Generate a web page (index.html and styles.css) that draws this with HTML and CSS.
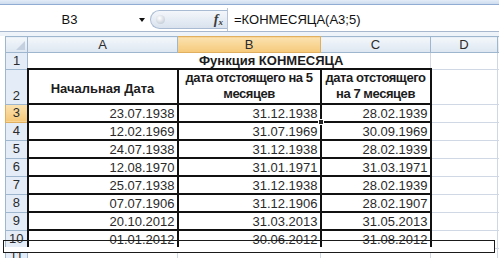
FILE: index.html
```html
<!DOCTYPE html>
<html lang="ru">
<head>
<meta charset="utf-8">
<title>КОНМЕСЯЦА</title>
<link rel="stylesheet" href="styles.css">
</head>
<body>
<div class="app">
  <div class="ribbon-edge"></div>
  <div class="fbar">
    <div class="namebox"><span class="nb-text">B3</span><span class="nb-arrow"></span></div>
    <div class="fxpill"><span class="grip"></span><span class="fx">f<sub>x</sub></span></div>
    <div class="formula">=КОНМЕСЯЦА(A3;5)</div>
  </div>
  <div class="gap"></div>
  <div class="sheet">
    <table class="grid">
      <colgroup>
        <col class="c-rh"><col class="c-a"><col class="c-b"><col class="c-c"><col class="c-d"><col class="c-e">
      </colgroup>
      <tr class="r-hdr">
        <th class="corner"><span class="corner-tri"></span></th>
        <th class="ch">A</th><th class="ch sel">B</th><th class="ch">C</th><th class="ch">D</th><th class="ch"></th>
      </tr>
      <tr class="r-1">
        <th class="rh">1</th>
        <td colspan="3" class="title">Функция КОНМЕСЯЦА</td>
        <td></td><td></td>
      </tr>
      <tr class="r-2">
        <th class="rh rh-2">2</th>
        <td class="hd hd-a bx">Начальная Дата</td>
        <td class="hd hd-n bx">дата отстоящего на 5<br>месяцев</td>
        <td class="hd hd-n bx">дата отстоящего<br>на 7 месяцев</td>
        <td></td><td></td>
      </tr>
      <tr class="r-d">
        <th class="rh sel">3</th>
        <td class="num bx">23.07.1938</td><td class="num bx cur">31.12.1938<span class="handle"></span></td><td class="num bx">28.02.1939</td><td></td><td></td>
      </tr>
      <tr class="r-d">
        <th class="rh">4</th>
        <td class="num bx">12.02.1969</td><td class="num bx">31.07.1969</td><td class="num bx">30.09.1969</td><td></td><td></td>
      </tr>
      <tr class="r-d">
        <th class="rh">5</th>
        <td class="num bx">24.07.1938</td><td class="num bx">31.12.1938</td><td class="num bx">28.02.1939</td><td></td><td></td>
      </tr>
      <tr class="r-d">
        <th class="rh">6</th>
        <td class="num bx">12.08.1970</td><td class="num bx">31.01.1971</td><td class="num bx">31.03.1971</td><td></td><td></td>
      </tr>
      <tr class="r-d">
        <th class="rh">7</th>
        <td class="num bx">25.07.1938</td><td class="num bx">31.12.1938</td><td class="num bx">28.02.1939</td><td></td><td></td>
      </tr>
      <tr class="r-d">
        <th class="rh">8</th>
        <td class="num bx">07.07.1906</td><td class="num bx">31.12.1906</td><td class="num bx">28.02.1907</td><td></td><td></td>
      </tr>
      <tr class="r-d">
        <th class="rh">9</th>
        <td class="num bx">20.10.2012</td><td class="num bx">31.03.2013</td><td class="num bx">31.05.2013</td><td></td><td></td>
      </tr>
      <tr class="r-d">
        <th class="rh">10</th>
        <td class="num bx">01.01.2012</td><td class="num bx">30.06.2012</td><td class="num bx">31.08.2012</td><td></td><td></td>
      </tr>
      <tr class="r-11">
        <th class="rh rh-11">11</th>
        <td></td><td></td><td></td><td></td><td></td>
      </tr>
    </table>
    <div class="frame"></div>
  </div>
</div>
</body>
</html>
```

FILE: styles.css
```css
* { box-sizing: border-box; margin: 0; padding: 0; }
html, body { width: 499px; height: 258px; overflow: hidden; background: #fff; }
body { font-family: "Liberation Sans", Arial, sans-serif; font-size: 13px; color: #222; }

.app { width: 499px; height: 258px; overflow: hidden; }

.ribbon-edge {
  height: 5px;
  background: linear-gradient(#e3ecf7, #cddcef);
  border-bottom: 1px solid #90acd2;
}

.fbar {
  height: 26px;
  display: flex;
  align-items: center;
  padding-top: 3px;
  background: #fff;
}
.namebox { width: 150px; display: flex; align-items: center; }
.nb-text { width: 139px; text-align: center; font-size: 13px; color: #111; }
.nb-arrow {
  width: 0; height: 0;
  border-left: 3px solid transparent;
  border-right: 3px solid transparent;
  border-top: 4px solid #111;
}
.fxpill {
  width: 77px; height: 19px;
  border: 1px solid #a9bbd3;
  border-right: none;
  border-radius: 10px 0 0 10px;
  background: linear-gradient(#f4f7fb, #d9e2ee);
  display: flex; align-items: center; justify-content: space-between;
  padding: 0 4px 0 5px;
}
.grip {
  width: 9px; height: 9px; border-radius: 50%;
  background: radial-gradient(circle at 40% 35%, #fff, #b4bfcc);
}
.fx {
  font-family: "Liberation Serif", serif;
  font-style: italic; font-weight: bold;
  font-size: 14px; color: #3c3c3c; line-height: 1;
}
.fx sub { font-size: 9px; vertical-align: -1px; }
.formula {
  flex: 1; height: 23px;
  border-left: 1px solid #b5c4d8;
  padding-left: 6px;
  display: flex; align-items: center;
  font-size: 13px; color: #111;
}

.gap { height: 5px; border-top: 1px solid #a7b7cd; background: #eef3f9; }

.sheet { position: relative; padding-left: 5px; }

.grid {
  border-collapse: collapse;
  table-layout: fixed;
  width: 494px;
}
.c-rh { width: 22px; }
.c-a { width: 150px; }
.c-b { width: 143px; }
.c-c { width: 110px; }
.c-d { width: 67px; }
.c-e { width: 2px; }

.grid td {
  border: 1px solid #d0d7e5;
  padding: 0 2px;
  white-space: nowrap;
  overflow: visible;
  color: #2a2a2a;
  line-height: 15px;
}
.grid th {
  font-weight: normal;
  border: 1px solid #9eb6ce;
  color: #2b2b2b;
  background: linear-gradient(#f3f7fb, #dde6f1);
  text-align: center;
  line-height: 14px;
}
.grid th.rh { background: #e4ecf7; font-size: 13px; }
.grid th.rh-2 { vertical-align: bottom; padding-bottom: 1px; }
.grid th.rh-11 { vertical-align: top; }
.grid th.sel { background: linear-gradient(#fbe2b0, #f6c97a); border-color: #e0b060; }
.corner { position: relative; }
.corner-tri {
  position: absolute; right: 2px; bottom: 2px;
  width: 0; height: 0;
  border-left: 9px solid transparent;
  border-bottom: 9px solid #c4d0e0;
}

.r-hdr { height: 16px; }
.r-1 { height: 16px; }
.r-2 { height: 35px; }
.r-d { height: 18px; }
.r-11 { height: 12px; }

.title {
  font-weight: bold;
  text-align: left;
  padding-left: 171px !important;
  color: #1c1c1c !important;
}
.grid td.bx { border: 2px solid #111; }
.grid td.hd {
  font-weight: bold;
  text-align: center;
  line-height: 16px;
  color: #1c1c1c;
  padding: 0;
}
.grid td.hd-a { padding-top: 5px; }
.grid td.hd-n { letter-spacing: -0.45px; vertical-align: bottom; padding-bottom: 1px; }
.num { text-align: right; }
.cur { position: relative; }
.handle {
  position: absolute; right: -4px; bottom: -4px;
  width: 6px; height: 6px;
  background: #222; border: 1px solid #fff;
}

.frame {
  position: absolute;
  left: 3px; top: 204px;
  width: 492px; height: 13px;
  border: 1px solid #1a1a1a;
  background: linear-gradient(to bottom, transparent 6px, #fff 6px);
}
```
